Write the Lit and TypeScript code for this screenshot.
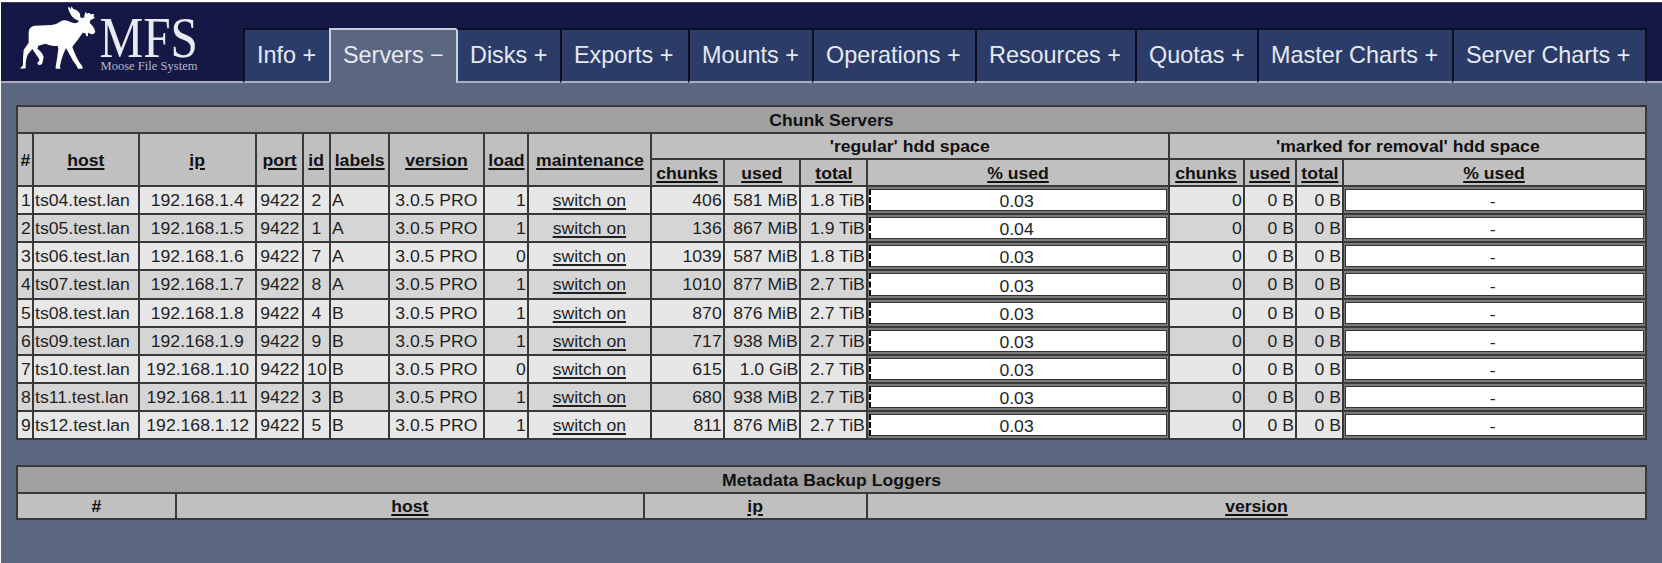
import { LitElement, html, css, svg } from "lit";
import { customElement } from "lit/decorators.js";
import { classMap } from "lit/directives/class-map.js";

const TABS = [
  ["Info", "+"], ["Servers", "−"], ["Disks", "+"], ["Exports", "+"], ["Mounts", "+"],
  ["Operations", "+"], ["Resources", "+"], ["Quotas", "+"], ["Master Charts", "+"], ["Server Charts", "+"],
];

const SERVERS = [
  ["ts04.test.lan", "192.168.1.4", "2", "A", "1", "406", "581 MiB", "1.8 TiB", "0.03"],
  ["ts05.test.lan", "192.168.1.5", "1", "A", "1", "136", "867 MiB", "1.9 TiB", "0.04"],
  ["ts06.test.lan", "192.168.1.6", "7", "A", "0", "1039", "587 MiB", "1.8 TiB", "0.03"],
  ["ts07.test.lan", "192.168.1.7", "8", "A", "1", "1010", "877 MiB", "2.7 TiB", "0.03"],
  ["ts08.test.lan", "192.168.1.8", "4", "B", "1", "870", "876 MiB", "2.7 TiB", "0.03"],
  ["ts09.test.lan", "192.168.1.9", "9", "B", "1", "717", "938 MiB", "2.7 TiB", "0.03"],
  ["ts10.test.lan", "192.168.1.10", "10", "B", "0", "615", "1.0 GiB", "2.7 TiB", "0.03"],
  ["ts11.test.lan", "192.168.1.11", "3", "B", "1", "680", "938 MiB", "2.7 TiB", "0.03"],
  ["ts12.test.lan", "192.168.1.12", "5", "B", "1", "811", "876 MiB", "2.7 TiB", "0.03"],
];

@customElement("mfs-logo")
class MfsLogo extends LitElement {
  static styles = css`
    :host { display: block; width: 242px; height: 78px; }
    .logo { display: block; }
    .word { font-family: "Liberation Serif", serif; fill: #e9eaf2; }
    .sub { font-family: "Liberation Serif", serif; fill: #b4b6cc; }
  `;
  render() {
    return html`<svg class="logo" width="240" height="78" viewBox="1 3 240 78">
      ${svg`<path transform="scale(.33333) translate(45 0)" fill="#fff" d="M17 203 24 196 24 175 26 150Q34 138 41 128L41 95Q43 80 58 77L110 75Q125 73 135 65 145 59 158 62L166 66 178 70 187 68 192 62Q175 57 168 45 161 34 159 23L162 20 168 28 169 18 175 27Q190 30 195 42L196 52Q202 56 208 52 208 43 212 35L216 41 222 38 227 43 238 42 235 49 240 53 226 61 224 69Q238 80 241 96 238 104 228 102L219 98 219 108Q214 112 211 100L203 98Q190 118 172 140 178 160 193 187L202 199 203 206 189 206Q186 196 174 182L153 144Q145 160 139 180L135 199 136 206 122 206 122 200Q127 175 130 145L128 138Q105 138 92 131L70 137 67 146Q83 157 86 172 84 183 81 192 74 198 68 193L67 188Q74 186 73 178 62 162 52 147L38 164Q31 180 32 205L17 206Z"/>`}
      <text class="word" x="99.5" y="57" font-size="57" textLength="98.5" lengthAdjust="spacingAndGlyphs">MFS</text>
      <text class="sub" x="100.5" y="69.5" font-size="13.2" textLength="97" lengthAdjust="spacingAndGlyphs">Moose File System</text>
    </svg>`;
  }
}

@customElement("app-root")
class AppRoot extends LitElement {
  static styles = css`
    :host {
      display: block; box-sizing: border-box; width: 1662px; height: 563px; overflow: hidden;
      padding: 2px 0 0 1px; background: #fff;
      font-family: "Liberation Sans", Arial, sans-serif;
    }
    .page { height: 561px; background: #5b6781; }
    .head { display: flex; height: 81px; box-sizing: border-box; background: #151844; border-top: 1px solid #3a3c62; border-bottom: 2px solid #a9adc0; }
    .tabs { display: grid; margin: 25px 0 0; height: 55px; grid-template-columns: 86px 127px 104px 128px 124px 163px 160px 122px 195px 195px; }
    .tab {
      box-sizing: border-box; border: solid #0b0f25; border-width: 2px 0 0 2px; border-bottom: 2px solid #a9adc0;
      background: #2b3c68; color: #e6e9f2; font-size: 23.4px; line-height: 51px; height: 55px;
      padding-left: 12px; white-space: pre; overflow: hidden;
    }
    .tab:last-child { border-right: 2px solid #0b0f25; }
    .tab.active { background: #5b6781; border-color: #c9ccdb; border-bottom-color: #5b6781; }
    .tab.after { border-left-color: #c9ccdb; }
    .tables { padding: 22px 0 0 15px; display: flex; flex-direction: column; gap: 25px; align-items: flex-start; }
    .grid { display: grid; gap: 2px; padding: 2px; background: #393939; font-size: 16px; color: #1f1f1f; white-space: nowrap; }
    .chunk {
      grid-template-columns: 14px 104px 115px 45px 25px 57px 93px 42px 121px 71px 74px 65px 300px 73px 50px 45px 301px;
      grid-template-rows: 25px 24px 25px 26px 26px 26px 27px 26px 26px 26px 26px 26px;
    }
    .meta { grid-template-columns: 157px 466px 221px 777px; grid-template-rows: 25px 24px; }
    .cell { display: flex; align-items: center; min-width: 0; justify-content: center; background: #e7e7e7; padding-top: 1px; }
    .txt { display: block; transform: scaleX(1.1); }
    .even { background: #d5d5d5; }
    .right { justify-content: flex-end; padding-right: 1px; }
    .right .txt { transform-origin: right; }
    .left { justify-content: flex-start; padding-left: 1px; }
    .left .txt { transform-origin: left; }
    .th { background: #c0c0c0; color: #111; font-weight: bold; padding-top: 2px; }
    .title { background: #a0a0a0; grid-column: 1 / -1; }
    .link { text-decoration: underline; text-decoration-thickness: 1.5px; text-underline-offset: 2px; }
    .tall { grid-row: span 2; }
    .wide { grid-column: span 4; }
    .progress { background: #7b7b7b; padding: 2px 1px; align-items: stretch; }
    .bar { flex: 1; display: flex; align-items: center; justify-content: center; box-sizing: border-box; border: 1px solid #333; background: #fff; line-height: 17px; padding: 3px 3px 0 0; }
    .filled { border-left: 2px dashed #000; }
  `;

  th(label: string, extra = "") {
    return html`<div class="cell th ${extra}"><span class="txt ${classMap({ link: label !== "#" })}">${label}</span></div>`;
  }

  row(s: string[], i: number) {
    const [host, ip, id, label, load, chunks, used, total, pct] = s;
    const cell = (text: string, align = "") =>
      html`<div class="cell ${align} ${i % 2 ? "even" : ""}"><span class="txt">${text}</span></div>`;
    return html`
      ${cell(String(i + 1), "right")}${cell(host, "left")}${cell(ip)}${cell("9422")}${cell(id)}${cell(label, "left")}
      ${cell("3.0.5 PRO")}${cell(load, "right")}
      <div class="cell ${i % 2 ? "even" : ""}"><span class="txt link">switch on</span></div>
      ${cell(chunks, "right")}${cell(used, "right")}${cell(total, "right")}
      <div class="cell progress"><div class="bar filled"><span class="txt">${pct}</span></div></div>
      ${cell("0", "right")}${cell("0 B", "right")}${cell("0 B", "right")}
      <div class="cell progress"><div class="bar"><span class="txt">-</span></div></div>`;
  }

  render() {
    return html`<div class="page">
      <header class="head">
        <mfs-logo></mfs-logo>
        <nav class="tabs">
          ${TABS.map(([name, sign], i) => html`<div class="tab ${classMap({ active: i === 1, after: i === 2 })}">${name} ${sign}</div>`)}
        </nav>
      </header>
      <main class="tables">
        <section class="grid chunk">
          <div class="cell th title"><span class="txt">Chunk Servers</span></div>
          ${["#", "host", "ip", "port", "id", "labels", "version", "load", "maintenance"].map((l) => this.th(l, "tall"))}
          <div class="cell th wide"><span class="txt">'regular' hdd space</span></div>
          <div class="cell th wide"><span class="txt">'marked for removal' hdd space</span></div>
          ${["chunks", "used", "total", "% used", "chunks", "used", "total", "% used"].map((l) => this.th(l))}
          ${SERVERS.map((s, i) => this.row(s, i))}
        </section>
        <section class="grid meta">
          <div class="cell th title"><span class="txt">Metadata Backup Loggers</span></div>
          ${["#", "host", "ip", "version"].map((l) => this.th(l))}
        </section>
      </main>
    </div>`;
  }
}
